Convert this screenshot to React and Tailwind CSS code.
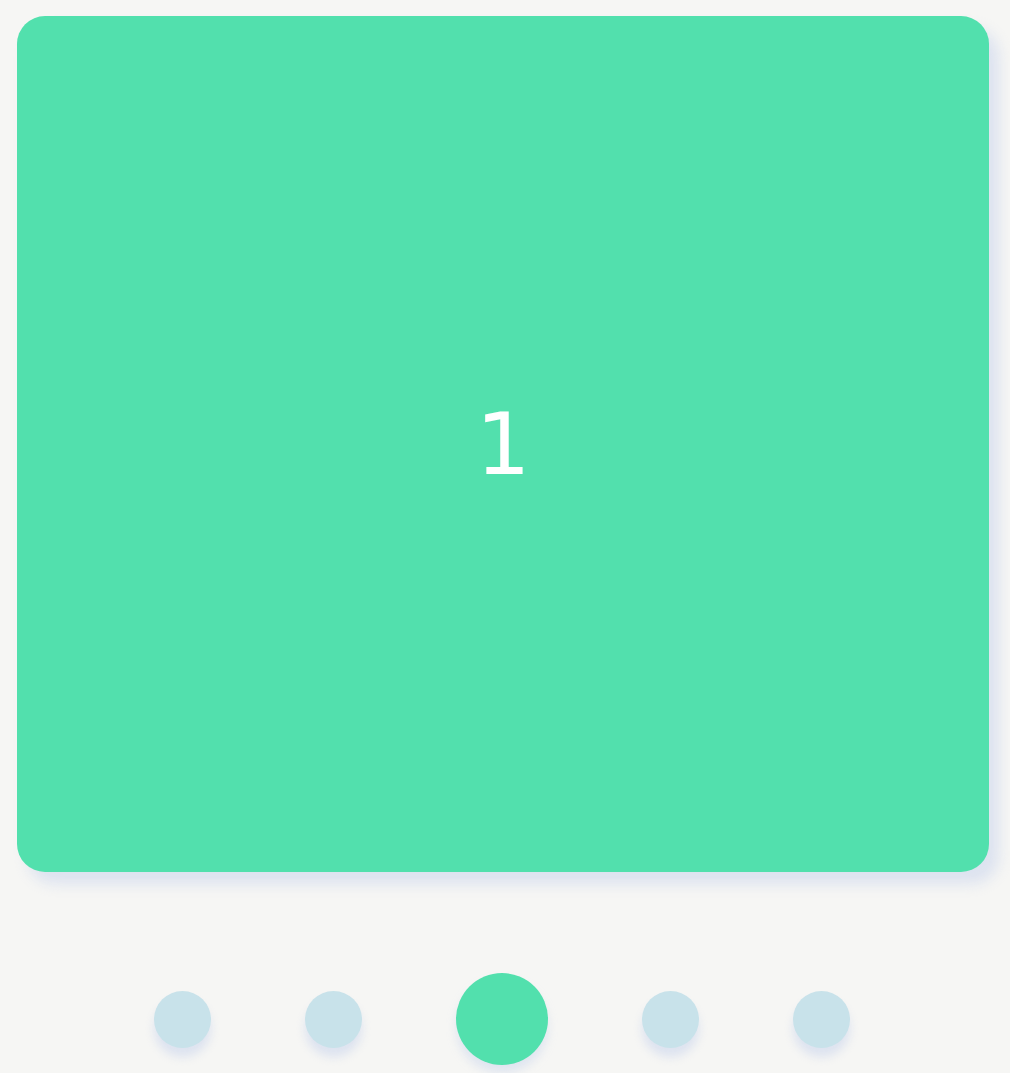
import React from 'react';

export default function App() {
  const dots = [0, 1, 2, 3, 4];
  const active = 2;

  return (
    <div className="min-h-[1073px] w-[1010px] bg-[#f6f6f4] pt-4 pl-[17px]" style={{ fontFamily: '"DejaVu Sans", sans-serif' }}>
      <div className="w-[972px]">
        {/* Slide */}
        <div className="h-[856px] rounded-[28px] bg-[#52e0ad] shadow-[10px_12px_14px_rgba(190,205,235,0.45)] flex items-center justify-center">
          <span className="text-[86px] leading-none text-white">1</span>
        </div>

        {/* Pagination */}
        <div className="mt-[101px] flex items-center justify-center gap-[94px] pr-[2px]">
          {dots.map(i =>
            i === active ? (
              <div key={i} className="w-[92px] h-[92px] rounded-full bg-[#52e0ad] shadow-[0_8px_10px_rgba(190,205,235,0.4)]" />
            ) : (
              <div key={i} className="w-[57px] h-[57px] rounded-full bg-[#c8e2ea] shadow-[0_9px_10px_rgba(190,205,235,0.45)]" />
            )
          )}
        </div>
      </div>
    </div>
  );
}
